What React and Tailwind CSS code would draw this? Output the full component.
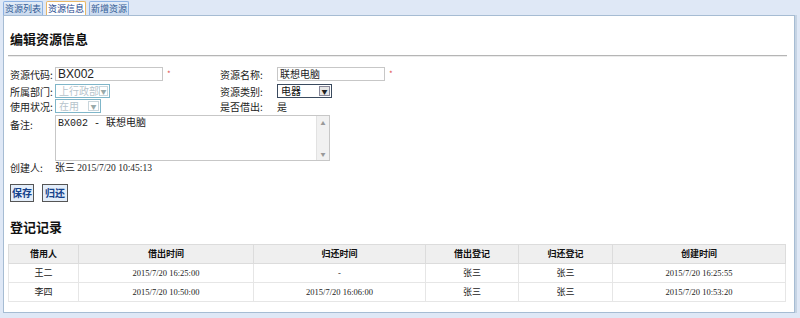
const rows = [
  { who: "王二", out: "2015/7/20 16:25:00", back: "-", outBy: "张三", backBy: "张三", created: "2015/7/20 16:25:55" },
  { who: "李四", out: "2015/7/20 10:50:00", back: "2015/7/20 16:06:00", outBy: "张三", backBy: "张三", created: "2015/7/20 10:53:20" },
];

const cjk = "font-['SimSun','Noto_Sans_CJK_SC',sans-serif]";
const serif = "font-['Liberation_Serif','Noto_Sans_CJK_SC',serif]";

const Tab = ({ label, active }) => (
  <div
    className={`h-[14px] w-[40px] flex items-center justify-center text-[9px] leading-none border border-b-0 rounded-t-[2px] ${
      active
        ? "bg-white border-[#e8b86a] text-[#15428b]"
        : "bg-gradient-to-b from-[#e4ecf7] to-[#c9d9ee] border-[#8db2e3] text-[#2f5a94]"
    }`}
  >
    {label}
  </div>
);

const Select = ({ value, width, disabled }) => (
  <div
    className={`h-[14px] flex items-center border bg-white ${width} ${
      disabled ? "border-[#7fb6c9] text-[#b6c4cc]" : "border-[#3a4a5e] text-[#111]"
    }`}
  >
    <span className="flex-1 pl-[3px] text-[10px] leading-none whitespace-nowrap">{value}</span>
    <span
      className={`w-[11px] h-[10px] mr-[1px] flex items-center justify-center text-[6px] border ${
        disabled ? "border-[#c9d6dc] text-[#9aa]" : "border-[#889] bg-[#e6e6e6] text-[#222]"
      }`}
    >
      ▼
    </span>
  </div>
);

const Label = ({ children }) => <div className="w-[45px] whitespace-nowrap">{children}</div>;
const RLabel = ({ children }) => <div className="w-[57px] whitespace-nowrap">{children}</div>;

export default function App() {
  return (
    <div className={`w-[800px] h-[318px] bg-[#dfe8f6] ${cjk} text-[10px] text-[#222] overflow-hidden`}>
      <div className="flex gap-[3px] pl-[3px] pt-[1px]">
        <Tab label="资源列表" />
        <Tab label="资源信息" active />
        <Tab label="新增资源" />
      </div>
      <div className="ml-[3px] w-[792px] h-[298px] bg-white border border-[#a6bcd3] shadow-[2px_0_0_#c6d4e4] px-[4px]">
        <h2 className="mt-[16px] ml-[2px] text-[13px] font-bold leading-none text-[#111]">编辑资源信息</h2>
        <div className="mt-[10px] h-[2px] border-t border-[#b5b5b5] border-b border-b-[#ececec] mr-[3px]" />

        <div className="mt-[10px] ml-[2px] flex flex-col">
          <div className="flex items-center h-[14px] mb-[3px]">
            <div className="w-[210px] flex items-center">
              <Label>资源代码:</Label>
              <div className="w-[108px] h-[14px] border border-[#c7c7c7] pl-[2px] text-[12px] font-['Liberation_Sans',sans-serif] leading-[12px]">BX002</div>
              <span className="ml-[4px] text-[#e05050] text-[8px]">*</span>
            </div>
            <RLabel>资源名称:</RLabel>
            <div className="w-[108px] h-[14px] border border-[#c7c7c7] pl-[2px] leading-[12px] whitespace-nowrap">联想电脑</div>
            <span className="ml-[4px] text-[#e05050] text-[8px]">*</span>
          </div>
          <div className="flex items-center h-[14px] mb-[1px]">
            <div className="w-[210px] flex items-center">
              <Label>所属部门:</Label>
              <Select value="上行政部" width="w-[55px]" disabled />
            </div>
            <RLabel>资源类别:</RLabel>
            <Select value="电器" width="w-[55px]" />
          </div>
          <div className="flex items-center h-[14px] mb-[2px]">
            <div className="w-[210px] flex items-center">
              <Label>使用状况:</Label>
              <Select value="在用" width="w-[46px]" disabled />
            </div>
            <RLabel>是否借出:</RLabel>
            <div>是</div>
          </div>
          <div className="flex">
            <div className="w-[45px] pt-[2px] whitespace-nowrap">备注:</div>
            <div className="w-[275px] h-[46px] border border-[#c7c7c7] flex">
              <div className="flex-1 pl-[2px] pt-[2px] font-['Liberation_Mono','Noto_Sans_CJK_SC',monospace] text-[10px] leading-[12px] whitespace-nowrap">
                BX002 - 联想电脑
              </div>
              <div className="w-[13px] bg-[#f1f1f1] border-l border-[#e2e2e2] flex flex-col items-center justify-between py-[3px] text-[5px] text-[#999]">
                <span>▲</span>
                <span>▼</span>
              </div>
            </div>
          </div>
          <div className="flex items-center h-[13px]">
            <Label>创建人:</Label>
            <div className="whitespace-nowrap">
              张三 <span className={`${serif} text-[9.5px]`}>2015/7/20 10:45:13</span>
            </div>
          </div>
        </div>

        <div className="mt-[10px] ml-[2px] flex gap-[8px]">
          <button className="h-[18px] w-[24px] border border-[#555] bg-[#e4eefa] text-[10px] font-bold text-[#15428b] leading-none">保存</button>
          <button className="h-[18px] w-[26px] border border-[#555] bg-[#e4eefa] text-[10px] font-bold text-[#15428b] leading-none">归还</button>
        </div>

        <h2 className="mt-[18px] ml-[2px] text-[13px] font-bold leading-none text-[#111]">登记记录</h2>

        <table className="mt-[11px] w-[778px] border-collapse border border-[#cfcfcf] text-[9px] text-center">
          <thead>
            <tr className="h-[19px] bg-[#efefef] font-bold text-[#111]">
              <th className="w-[70px] border border-[#dcdcdc]">借用人</th>
              <th className="w-[175px] border border-[#dcdcdc]">借出时间</th>
              <th className="w-[172px] border border-[#dcdcdc]">归还时间</th>
              <th className="w-[93px] border border-[#dcdcdc]">借出登记</th>
              <th className="w-[94px] border border-[#dcdcdc]">归还登记</th>
              <th className="border border-[#dcdcdc]">创建时间</th>
            </tr>
          </thead>
          <tbody>
            {rows.map((r) => (
              <tr key={r.who} className="h-[19px]">
                <td className="border border-[#e6e6e6]">{r.who}</td>
                <td className={`border border-[#e6e6e6] ${serif} text-[8.5px]`}>{r.out}</td>
                <td className={`border border-[#e6e6e6] ${serif} text-[8.5px]`}>{r.back}</td>
                <td className="border border-[#e6e6e6]">{r.outBy}</td>
                <td className="border border-[#e6e6e6]">{r.backBy}</td>
                <td className={`border border-[#e6e6e6] ${serif} text-[8.5px]`}>{r.created}</td>
              </tr>
            ))}
          </tbody>
        </table>
      </div>
    </div>
  );
}
